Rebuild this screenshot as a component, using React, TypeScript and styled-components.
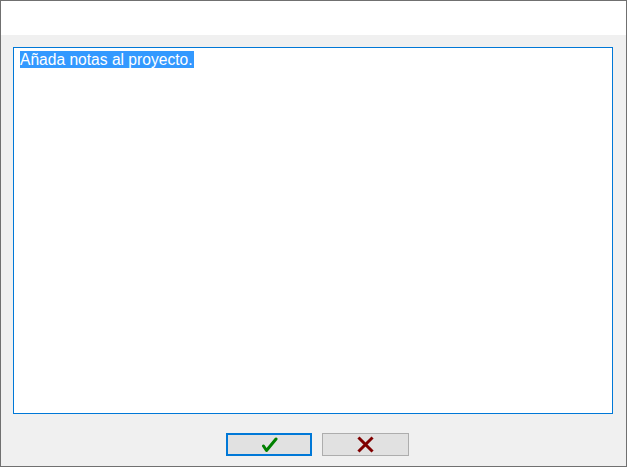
import React from "react";
import styled, { createGlobalStyle } from "styled-components";

const Global = createGlobalStyle`
  html, body { margin: 0; padding: 0; background: #ffffff; }
  body { font-family: "Liberation Sans", Arial, sans-serif; }
`;

const Window = styled.div`
  box-sizing: border-box;
  width: 627px;
  height: 467px;
  border: 1px solid #707070;
  display: flex;
  flex-direction: column;
  background: #f0f0f0;
`;

const TitleBar = styled.div`
  height: 34px;
  background: #ffffff;
  flex: none;
`;

const Body = styled.div`
  flex: 1;
  display: flex;
  flex-direction: column;
  padding: 12px 13px 10px 12px;
`;

const NotesBox = styled.div`
  box-sizing: border-box;
  height: 367px;
  border: 1px solid #0078d7;
  background: #ffffff;
  padding: 3px 6px;
  font-family: "Liberation Sans", Arial, sans-serif;
  font-size: 15.6px;
  color: #000000;
`;

const Selected = styled.span`
  display: inline-block;
  height: 17px;
  line-height: 17px;
  padding-right: 1px;
  background: #3399ff;
  color: #ffffff;
`;

const ButtonRow = styled.div`
  margin-top: 19px;
  display: flex;
  justify-content: center;
  gap: 10px;
  padding-left: 9px;
`;

const DialogButton = styled.button<{ $default?: boolean }>`
  box-sizing: border-box;
  width: ${(p) => (p.$default ? "86px" : "87px")};
  height: 23px;
  margin: 0;
  padding: 0;
  background: #e1e1e1;
  border: ${(p) => (p.$default ? "2px solid #0078d7" : "1px solid #adadad")};
  display: flex;
  align-items: center;
  justify-content: center;
`;

const CheckIcon = () => (
  <svg width="17" height="17" viewBox="0 0 17 17">
    <path d="M2.5 10 L5.5 14.5 L15 3" fill="none" stroke="#008000" strokeWidth="3" strokeLinecap="round" strokeLinejoin="round" />
  </svg>
);

const CrossIcon = () => (
  <svg width="17" height="17" viewBox="0 0 17 17">
    <path d="M2.5 2.5 L14.5 14.5 M14.5 2.5 L2.5 14.5" fill="none" stroke="#800000" strokeWidth="3" strokeLinecap="square" />
  </svg>
);

export default function App() {
  return (
    <>
      <Global />
      <Window>
        <TitleBar />
        <Body>
          <NotesBox>
            <Selected>Añada notas al proyecto.</Selected>
          </NotesBox>
          <ButtonRow>
            <DialogButton $default aria-label="Aceptar">
              <CheckIcon />
            </DialogButton>
            <DialogButton aria-label="Cancelar">
              <CrossIcon />
            </DialogButton>
          </ButtonRow>
        </Body>
      </Window>
    </>
  );
}
